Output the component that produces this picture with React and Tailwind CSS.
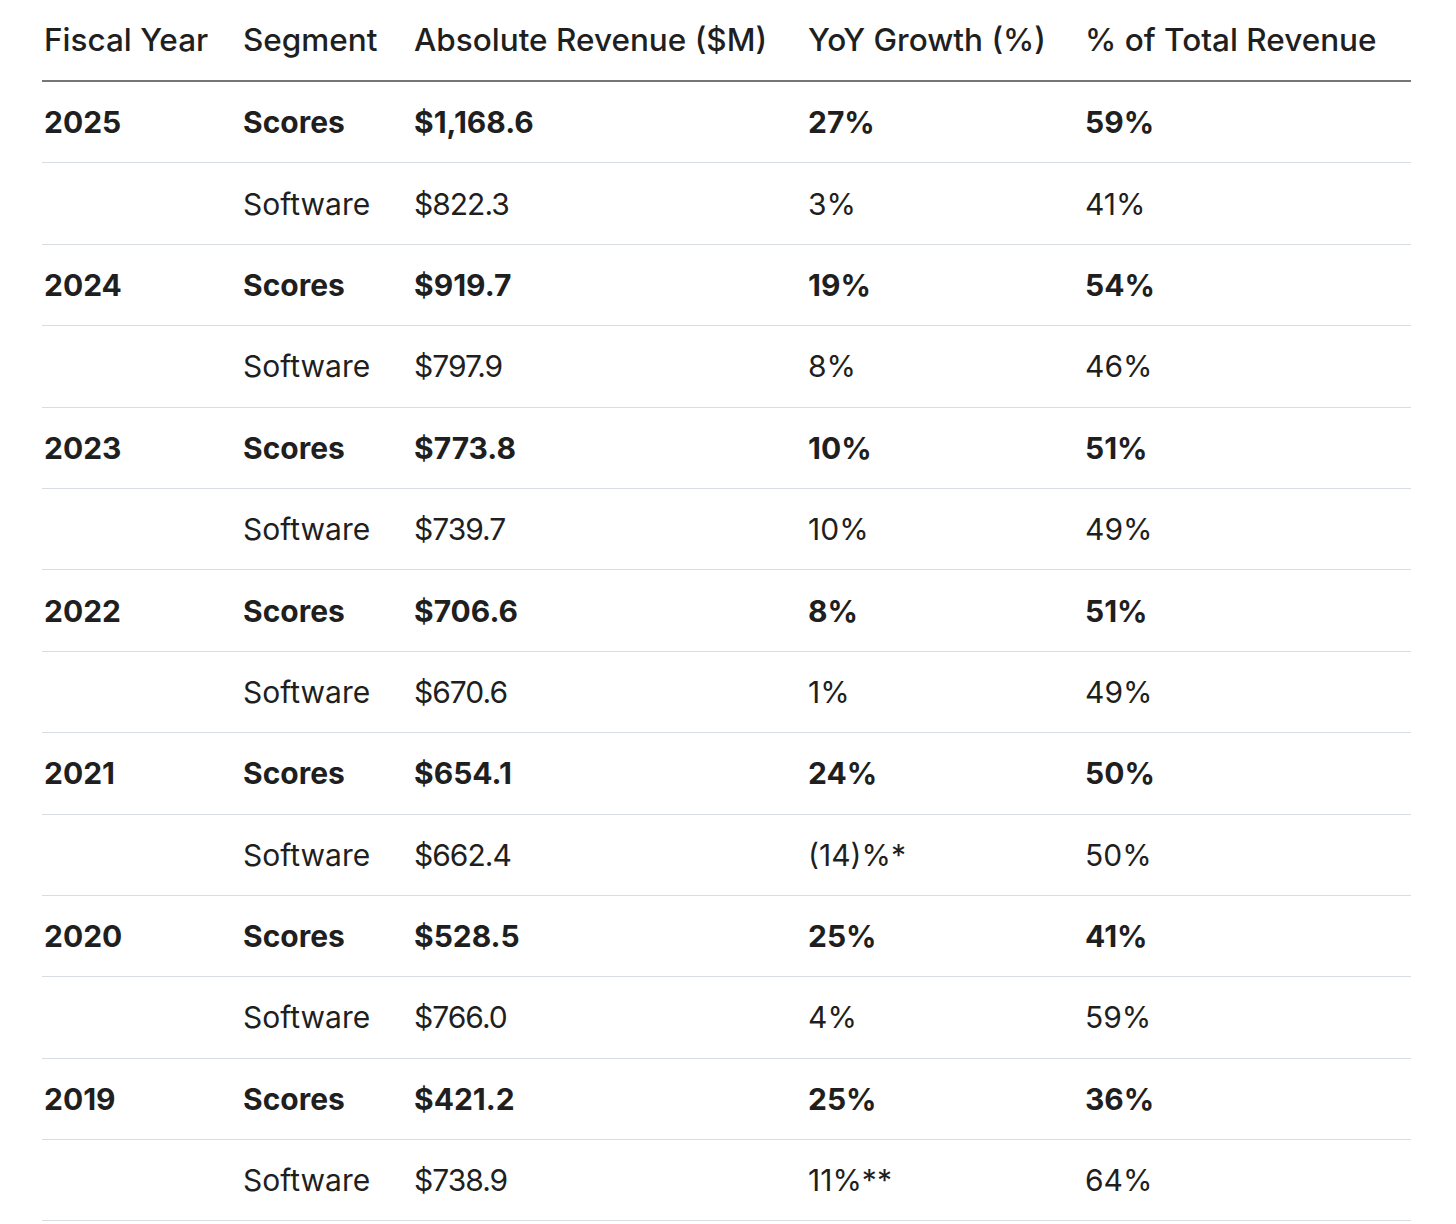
const rows = [
  ['2025', '$1,168.6', '27%', '59%', '$822.3', '3%', '41%'],
  ['2024', '$919.7', '19%', '54%', '$797.9', '8%', '46%'],
  ['2023', '$773.8', '10%', '51%', '$739.7', '10%', '49%'],
  ['2022', '$706.6', '8%', '51%', '$670.6', '1%', '49%'],
  ['2021', '$654.1', '24%', '50%', '$662.4', '(14)%*', '50%'],
  ['2020', '$528.5', '25%', '41%', '$766.0', '4%', '59%'],
  ['2019', '$421.2', '25%', '36%', '$738.9', '11%**', '64%'],
];

const headers = ['Fiscal Year', 'Segment', 'Absolute Revenue ($M)', 'YoY Growth (%)', '% of Total Revenue'];

function Row({ cells, bold }) {
  return (
    <div
      className={`grid grid-cols-[199px_171px_394px_277px_328px] h-[81.4px] items-center border-b border-[#d8dde5] ${
        bold ? 'font-bold' : 'font-normal'
      }`}
    >
      {cells.map((c, i) => (
        <div key={i} className={`pl-[2px] whitespace-nowrap ${!bold && i === 2 ? 'tracking-[-1px]' : ''}`}>
          {c}
        </div>
      ))}
    </div>
  );
}

export default function App() {
  return (
    <div
      className="bg-white w-[1456px] h-[1224px] pl-[42px] text-[#1f1f1f] text-[30px] leading-none"
      style={{ fontFamily: 'Inter, Roboto, sans-serif' }}
    >
      <div className="w-[1369px]">
        <div className="grid grid-cols-[199px_171px_394px_277px_328px] h-[82px] items-center border-b-2 border-[#747775] font-medium text-[31.5px]">
          {headers.map((h) => (
            <div key={h} className="pl-[2px] whitespace-nowrap">
              {h}
            </div>
          ))}
        </div>
        {rows.map((r) => (
          <div key={r[0]}>
            <Row bold cells={[r[0], 'Scores', r[1], r[2], r[3]]} />
            <Row cells={['', 'Software', r[4], r[5], r[6]]} />
          </div>
        ))}
      </div>
    </div>
  );
}
